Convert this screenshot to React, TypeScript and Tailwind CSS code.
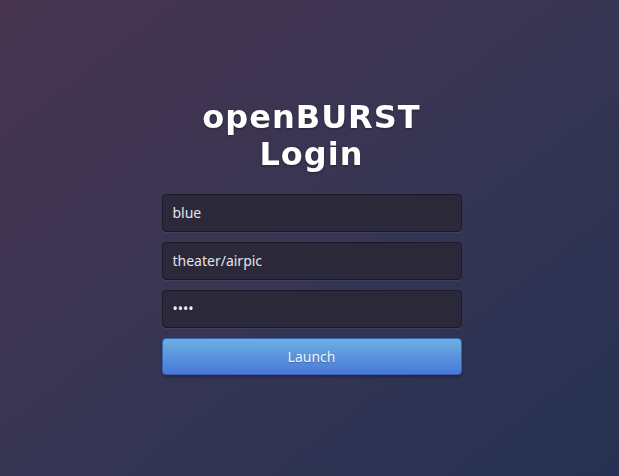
export default function App() {
  return (
    <div className="min-h-screen w-full flex items-center justify-center bg-gradient-to-br from-[#47344f] via-[#373553] to-[#263253]">
      <div className="w-[300px] flex flex-col items-center -mt-[3px] ml-[4px]">
        {/* Title */}
        <h1 className="text-center text-[32px] leading-[37px] font-bold tracking-[1px] text-white font-['DejaVu_Sans',sans-serif] drop-shadow-[0_1px_1px_rgba(0,0,0,0.35)]">
          openBURST
          <br />
          Login
        </h1>

        {/* Form */}
        <form className="mt-[21px] w-full flex flex-col gap-[10px] font-['Noto_Sans',sans-serif]">
          <input
            type="text"
            readOnly
            defaultValue="blue"
            className="h-[38px] w-full rounded-[4px] border border-[#1c1a28] bg-[#2a2839] px-[10px] text-[14px] text-[#e4e4ec] outline-none shadow-[0_1px_0_rgba(255,255,255,0.06)]"
          />
          <input
            type="text"
            readOnly
            defaultValue="theater/airpic"
            className="h-[38px] w-full rounded-[4px] border border-[#1c1a28] bg-[#2a2839] px-[10px] text-[14px] text-[#e4e4ec] outline-none shadow-[0_1px_0_rgba(255,255,255,0.06)]"
          />
          <input
            type="password"
            readOnly
            defaultValue="1234"
            className="h-[38px] w-full rounded-[4px] border border-[#1c1a28] bg-[#2a2839] px-[10px] text-[14px] text-[#f0f0f4] outline-none shadow-[0_1px_0_rgba(255,255,255,0.06)]"
          />
          <button
            type="button"
            className="h-[37px] w-full rounded-[4px] border border-[#3e62b8] bg-gradient-to-b from-[#6cb0e2] to-[#4a78d6] text-[14px] text-[#eef3ff] shadow-[0_2px_3px_rgba(0,0,0,0.3)] [text-shadow:0_1px_1px_rgba(0,0,0,0.25)]"
          >
            Launch
          </button>
        </form>
      </div>
    </div>
  );
}
